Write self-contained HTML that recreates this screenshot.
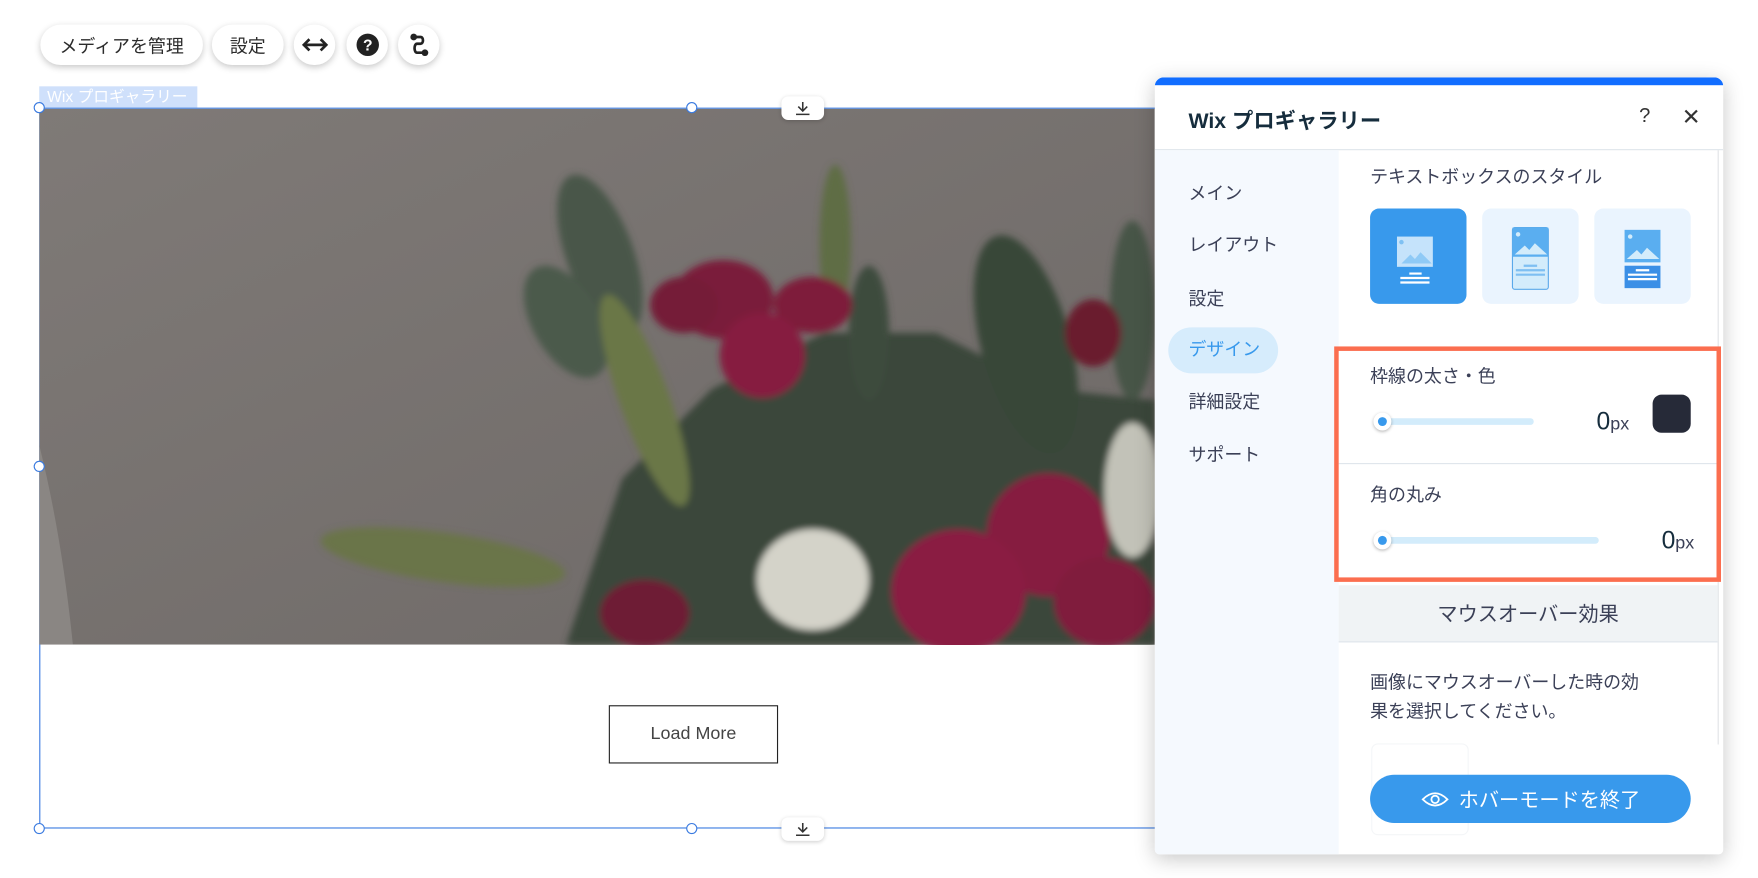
<!DOCTYPE html>
<html><head><meta charset="utf-8"><style>
html,body{margin:0;padding:0;width:1758px;height:878px;overflow:hidden;background:#fff}
#w{position:absolute;left:0;top:0;width:1568px;height:783px;transform:scale(1.12117);transform-origin:0 0;font-family:"Liberation Sans","Noto Sans CJK JP",sans-serif;color:#3b4057}
.a{position:absolute}
.pill{position:absolute;top:22px;height:36px;background:#fff;border-radius:18px;box-shadow:0 2px 6px rgba(0,0,0,.22);font-size:16px;color:#2b2b2b;display:flex;align-items:center;justify-content:center}
.h{position:absolute;width:8px;height:8px;border:1.5px solid #3b7be0;background:#fff;border-radius:50%}
.tab{position:absolute;width:38px;height:21px;background:#fff;border-radius:6px;box-shadow:0 1px 4px rgba(0,0,0,.2)}
.nav{position:absolute;left:1060px;font-size:16px;color:#3b4057}
.tile{position:absolute;top:186px;width:86px;height:85px;border-radius:8px;background:#eaf4fe}
.track{position:absolute;height:6px;border-radius:3px;background:#d3ecfb}
.knob{position:absolute;width:16px;height:16px;border-radius:50%;background:#fff;box-shadow:0 1px 3px rgba(0,0,0,.3)}
.knob:after{content:"";position:absolute;left:4px;top:4px;width:8px;height:8px;border-radius:50%;background:#3899ec}
</style></head><body><div id="w">
<div class="pill" style="left:36px;width:145px">メディアを管理</div>
<div class="pill" style="left:189px;width:64px">設定</div>
<div class="pill" style="left:262px;width:37px"><svg width="24" height="14" viewBox="0 0 24 14"><path d="M2 7h20M7 2L2 7l5 5M17 2l5 5-5 5" stroke="#222" stroke-width="2.4" fill="none"/></svg></div>
<div class="pill" style="left:309px;width:37px"><svg width="22" height="22" viewBox="0 0 22 22"><circle cx="11" cy="11" r="10" fill="#222"/><text x="11" y="16" font-size="14" font-weight="bold" fill="#fff" text-anchor="middle" font-family="Liberation Sans">?</text></svg></div>
<div class="pill" style="left:355px;width:37px"><svg width="20" height="22" viewBox="0 0 20 22"><circle cx="5" cy="4" r="3" fill="#222"/><circle cx="15" cy="18" r="3" fill="#222"/><path d="M5 4h6c3 0 3 6 0 6H8c-3 0-3 8 0 8h7" stroke="#222" stroke-width="2.4" fill="none"/></svg></div>

<div class="a" style="left:35px;top:77px;width:141px;height:19px;background:#cfe0fb;color:#fff;font-size:14px;line-height:19px;padding-left:7px;box-sizing:border-box">Wix プロギャラリー</div>
<div class="a" style="left:35px;top:96px;width:1100px;height:643px;border:1px solid #3b7be0;box-sizing:border-box"></div>

<svg class="a" style="left:35px;top:97px" width="995" height="478" viewBox="0 0 995 478">
<defs><linearGradient id="wall" x1="0" y1="0" x2="1" y2="1"><stop offset="0" stop-color="#7f7a77"/><stop offset="1" stop-color="#6d6866"/></linearGradient>
<filter id="bl"><feGaussianBlur stdDeviation="3"/></filter></defs>
<rect width="995" height="478" fill="url(#wall)"/>
<path d="M0 300Q20 380 30 478H0z" fill="#8a8683"/>
<g filter="url(#bl)">
<path d="M470 478L520 330 600 250 700 200 800 200 900 250 995 260V478z" fill="#3a463b"/>
<ellipse cx="500" cy="130" rx="30" ry="75" transform="rotate(-20 500 130)" fill="#485749"/>
<ellipse cx="470" cy="190" rx="30" ry="55" transform="rotate(-30 470 190)" fill="#4b5a4c"/>
<ellipse cx="710" cy="120" rx="14" ry="70" fill="#5f6d45"/>
<ellipse cx="740" cy="200" rx="18" ry="60" fill="#3e4c3e"/>
<ellipse cx="540" cy="260" rx="22" ry="100" transform="rotate(-20 540 260)" fill="#6b7747"/>
<ellipse cx="880" cy="210" rx="40" ry="100" transform="rotate(-15 880 210)" fill="#394739"/>
<ellipse cx="975" cy="180" rx="20" ry="80" fill="#465546"/>
<ellipse cx="360" cy="400" rx="110" ry="22" transform="rotate(8 360 400)" fill="#6b754a"/>
<ellipse cx="610" cy="170" rx="45" ry="35" fill="#7a1a3a"/>
<ellipse cx="690" cy="175" rx="35" ry="25" fill="#7e1a3b"/>
<ellipse cx="645" cy="220" rx="38" ry="38" fill="#861c40"/>
<ellipse cx="575" cy="175" rx="30" ry="25" fill="#751a37"/>
<ellipse cx="940" cy="200" rx="25" ry="30" fill="#6a1b2e"/>
<ellipse cx="900" cy="380" rx="55" ry="55" fill="#861a3f"/>
<ellipse cx="820" cy="430" rx="60" ry="55" fill="#8a1c42"/>
<ellipse cx="950" cy="440" rx="45" ry="40" fill="#801a3e"/>
<ellipse cx="540" cy="450" rx="40" ry="30" fill="#6e1a34"/>
<ellipse cx="690" cy="420" rx="50" ry="45" fill="#d4d3c9"/>
<ellipse cx="975" cy="340" rx="25" ry="60" fill="#c2c2b8"/>
</g></svg>

<div class="a" style="left:543px;top:629px;width:151px;height:52px;border:1px solid #222;box-sizing:border-box;font-size:16px;color:#444;display:flex;align-items:center;justify-content:center">Load More</div>

<div class="h" style="left:30px;top:91px"></div><div class="h" style="left:612px;top:91px"></div>
<div class="h" style="left:30px;top:411px"></div><div class="h" style="left:30px;top:734px"></div><div class="h" style="left:612px;top:734px"></div>
<div class="tab" style="left:697px;top:86px"><svg width="38" height="21"><path d="M19 5v8M15 9l4 4 4-4M13 16h12" stroke="#333" stroke-width="1.4" fill="none"/></svg></div>
<div class="tab" style="left:697px;top:729px"><svg width="38" height="21"><path d="M19 5v8M15 9l4 4 4-4M13 16h12" stroke="#333" stroke-width="1.4" fill="none"/></svg></div>

<div class="a" style="left:1030px;top:69px;width:507px;height:693px;background:#fff;border-radius:8px 8px 4px 4px;box-shadow:0 4px 18px rgba(0,0,0,.22);overflow:hidden">
<div class="a" style="left:0;top:0;width:507px;height:7px;background:#116dff"></div>
<div class="a" style="left:0;top:64px;width:507px;height:1px;background:#dfe5eb"></div>
<div class="a" style="left:0;top:65px;width:164px;height:628px;background:#f5f9fe"></div>
<div class="a" style="left:502px;top:65px;width:1px;height:530px;background:#e0e3e6"></div>
</div>
<div class="a" style="left:1060px;top:93px;font-size:19px;font-weight:bold;color:#162d3d">Wix プロギャラリー</div>
<div class="a" style="left:1462px;top:93px;font-size:18px;color:#333">?</div>
<div class="a" style="left:1500px;top:92px;font-size:20px;color:#333">✕</div>

<div class="nav" style="top:159px">メイン</div>
<div class="nav" style="top:205px">レイアウト</div>
<div class="nav" style="top:253px">設定</div>
<div class="a" style="left:1042px;top:292px;width:98px;height:41px;border-radius:21px;background:#d6ecfc"></div>
<div class="nav" style="top:298px;color:#3899ec">デザイン</div>
<div class="nav" style="top:345px">詳細設定</div>
<div class="nav" style="top:392px">サポート</div>

<div class="a" style="left:1222px;top:144px;font-size:16px">テキストボックスのスタイル</div>
<div class="tile" style="left:1222px;background:#3899ec"><svg width="86" height="85"><rect x="24" y="25" width="32" height="27" fill="#c5e3fb"/><circle cx="28" cy="30" r="2" fill="#7fc1f3"/><path d="M28 49l8-8 4 4 5-6 10 10z" fill="#8fcaf6"/><path d="M35 58h11M27 62h26M27 66h26" stroke="#fff" stroke-width="2"/></svg></div>
<div class="tile" style="left:1322px"><svg width="86" height="85"><rect x="27" y="17" width="32" height="55" rx="2" fill="#d3ecfb" stroke="#5aa9ea" stroke-width="1"/><rect x="27" y="17" width="32" height="26" fill="#5aaef0"/><circle cx="32" cy="23" r="2" fill="#d3ecfb"/><path d="M29 41l9-8 4 4 5-6 11 10z" fill="#d3ecfb"/><path d="M37 51h12M30 55h26M30 59h26" stroke="#7ebff2" stroke-width="2"/></svg></div>
<div class="tile" style="left:1422px"><svg width="86" height="85"><rect x="27" y="19" width="32" height="29" fill="#5aaef0"/><circle cx="32" cy="25" r="2" fill="#d3ecfb"/><path d="M29 45l9-8 4 4 5-6 11 10z" fill="#d3ecfb"/><rect x="27" y="51" width="32" height="20" fill="#3b8fe6"/><path d="M37 55h12M30 59h26M30 63h26" stroke="#fff" stroke-width="2"/></svg></div>

<div class="a" style="left:1194px;top:413px;width:338px;height:1px;background:#dfe5eb"></div>
<div class="a" style="left:1190px;top:309px;width:345px;height:210px;border:4px solid #fb6e4f;box-sizing:border-box"></div>
<div class="a" style="left:1222px;top:322px;font-size:16px">枠線の太さ・色</div>
<div class="track" style="left:1228px;top:373px;width:140px"></div>
<div class="knob" style="left:1225px;top:368px"></div>
<div class="a" style="left:1424px;top:363px;font-size:22px;color:#162d3d">0<span style="font-size:16px;color:#3b4057">px</span></div>
<div class="a" style="left:1474px;top:352px;width:34px;height:34px;border-radius:8px;background:#262a38"></div>
<div class="a" style="left:1222px;top:428px;font-size:16px">角の丸み</div>
<div class="track" style="left:1228px;top:479px;width:198px"></div>
<div class="knob" style="left:1225px;top:474px"></div>
<div class="a" style="left:1482px;top:469px;font-size:22px;color:#162d3d">0<span style="font-size:16px;color:#3b4057">px</span></div>

<div class="a" style="left:1194px;top:522px;width:338px;height:50px;background:#f0f3f5;border-bottom:1px solid #dfe5eb;font-size:18px;display:flex;align-items:center;justify-content:center">マウスオーバー効果</div>
<div class="a" style="left:1222px;top:597px;font-size:16px;line-height:26px">画像にマウスオーバーした時の効<br>果を選択してください。</div>
<div class="a" style="left:1223px;top:663px;width:85px;height:80px;border:1px solid #f4f6f8;border-radius:6px"></div>
<div class="a" style="left:1222px;top:691px;width:286px;height:43px;border-radius:22px;background:#3899ec;color:#fff;font-size:18px;display:flex;align-items:center;justify-content:center"><svg width="26" height="16" style="margin-right:8px"><path d="M2 8Q13-3 24 8Q13 19 2 8z" stroke="#fff" stroke-width="1.6" fill="none"/><circle cx="13" cy="8" r="3.3" stroke="#fff" stroke-width="1.6" fill="none"/></svg>ホバーモードを終了</div>
</div></body></html>
